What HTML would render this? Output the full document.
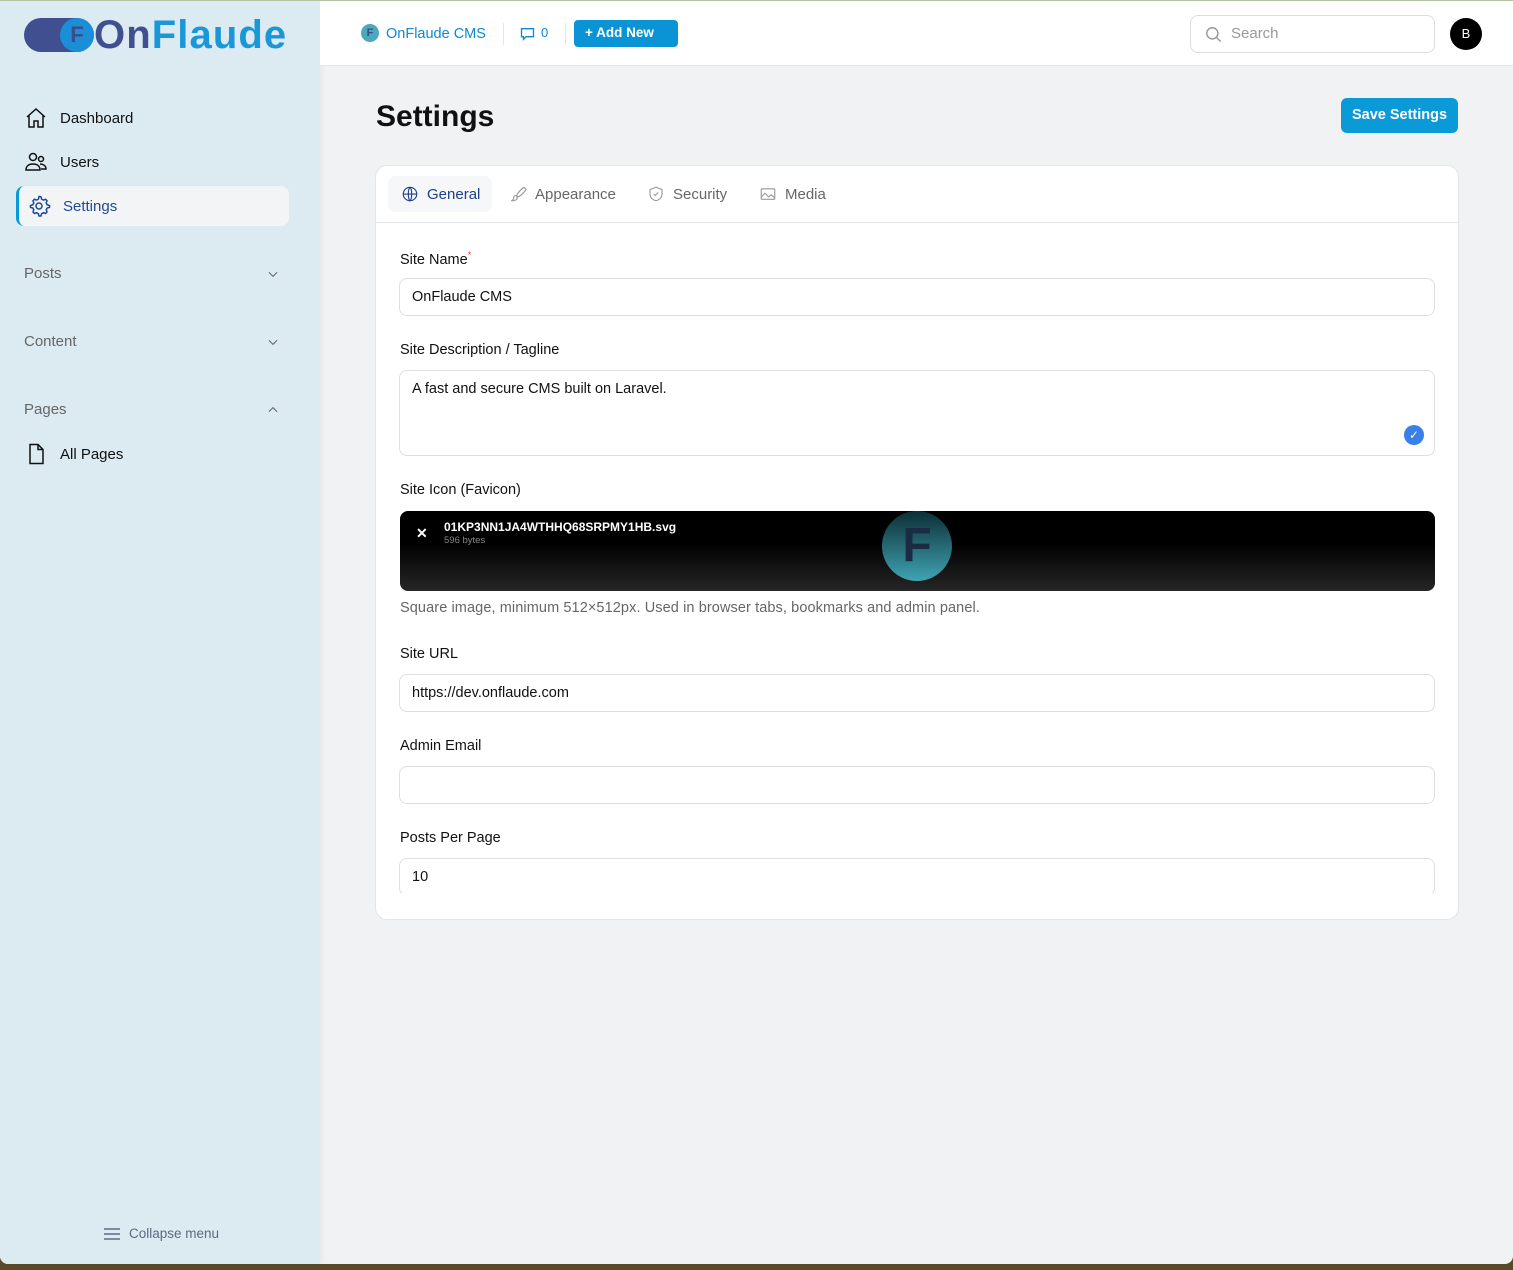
<!DOCTYPE html>
<html><head><meta charset="utf-8"><style>
*{box-sizing:border-box;margin:0;padding:0}
body{width:1513px;height:1270px;overflow:hidden;background:#5a4a2a;font-family:"Liberation Sans",sans-serif;position:relative}
.wrap{position:absolute;left:0;top:0;width:1513px;height:1264px;background:#f1f2f4;border-radius:0 0 8px 8px;overflow:hidden;border-top:1px solid #b5c4a0}
.side{position:absolute;left:0;top:0;width:320px;height:100%;background:#dceaf2;box-shadow:2px 0 6px rgba(0,0,0,.05)}
.top{position:absolute;left:320px;top:0;right:0;height:65px;background:#fff;border-bottom:1px solid #e2e4e8}
.logo{position:absolute;left:24px;top:16px;display:flex;align-items:center}
.pill{width:70px;height:34px;border-radius:17px;background:#3f4f8f;position:relative}
.pill .c{position:absolute;right:0;top:0;width:34px;height:34px;border-radius:50%;background:#1a8fd8;color:#3a4c8a;font-weight:bold;font-size:22px;text-align:center;line-height:34px}
.logotxt{font-size:40px;font-weight:bold;color:#1a97d8;letter-spacing:1.1px;line-height:36px}
.logotxt b{color:#3f4f8f}
.nav{position:absolute;left:24px;font-size:15px;color:#111;display:flex;align-items:center;gap:12px}
.nav svg{width:24px;height:24px;fill:none;stroke:#111;stroke-width:1.5}
.sec{position:absolute;left:24px;width:256px;font-size:15px;color:#666;display:flex;justify-content:space-between;align-items:center}
.sec svg{width:14px;height:14px;fill:none;stroke:#666;stroke-width:1.8}
.card{position:absolute;left:375px;top:164px;width:1084px;height:755px;background:#fff;border:1px solid #e3e5e8;border-radius:12px}
.lbl{position:absolute;left:24px;font-size:14.5px;color:#111}
.inp{position:absolute;left:23px;width:1036px;height:38px;border:1px solid #dcdfe3;border-radius:8px;font-size:14.5px;color:#111;padding:10px 12px}
.tab{position:absolute;top:10px;height:36px;display:flex;align-items:center;gap:8px;font-size:15px;color:#666}
.tab svg{width:18px;height:18px;fill:none;stroke:#999;stroke-width:1.5}
</style></head><body>
<div class="wrap">
<div class="side">
 <div class="logo"><div class="pill"><div class="c">F</div></div><div class="logotxt"><b>On</b>Flaude</div></div>
 <div class="nav" style="top:105px"><svg viewBox="0 0 24 24"><path d="M3 11 12 3l9 8M5 9.5V21h5v-6h4v6h5V9.5"/></svg>Dashboard</div>
 <div class="nav" style="top:149px"><svg viewBox="0 0 24 24"><circle cx="9" cy="7" r="3.5"/><circle cx="17" cy="9" r="2.5"/><path d="M2 20c0-4 3-6 7-6s7 2 7 6zM16 14c3 0 6 1.5 6 5h-5"/></svg>Users</div>
 <div style="position:absolute;left:16px;top:185px;width:273px;height:40px;background:#f3f4f6;border-radius:8px;border-left:3px solid #0a9ad8"></div>
 <div class="nav" style="top:193px;left:27px;color:#1d4a94"><svg viewBox="0 0 24 24" style="stroke:#1d4a94"><circle cx="12" cy="12" r="3"/><path d="M12 2.5l2 .3.6 2.3 1.8 1 2.2-.8 1.4 1.5-.8 2.2 1 1.8 2.3.6v2l-2.3.6-1 1.8.8 2.2-1.4 1.5-2.2-.8-1.8 1-.6 2.3h-2l-.6-2.3-1.8-1-2.2.8-1.4-1.5.8-2.2-1-1.8-2.3-.6v-2l2.3-.6 1-1.8-.8-2.2 1.4-1.5 2.2.8 1.8-1 .6-2.3z"/></svg>Settings</div>
 <div class="sec" style="top:264px">Posts<svg viewBox="0 0 24 24"><path d="M5 9l7 7 7-7"/></svg></div>
 <div class="sec" style="top:332px">Content<svg viewBox="0 0 24 24"><path d="M5 9l7 7 7-7"/></svg></div>
 <div class="sec" style="top:400px">Pages<svg viewBox="0 0 24 24"><path d="M5 15l7-7 7 7"/></svg></div>
 <div class="nav" style="top:441px"><svg viewBox="0 0 24 24"><path d="M6 2.5h8l5 5V21.5H6zM14 2.5v5h5"/></svg>All Pages</div>
 <div style="position:absolute;left:104px;top:1225px;font-size:13.5px;color:#5b6b80;display:flex;align-items:center;gap:9px"><svg width="16" height="14" viewBox="0 0 16 14" stroke="#5b6b80" stroke-width="1.6"><path d="M0 2h16M0 7h16M0 12h16"/></svg>Collapse menu</div>
</div>
<div class="top">
 <div style="position:absolute;left:41px;top:23px;width:18px;height:18px;border-radius:50%;background:#4aaabb;color:#3a4c8a;font-size:11px;font-weight:bold;text-align:center;line-height:18px">F</div>
 <div style="position:absolute;left:66px;top:25px;font-size:14.5px;color:#0a8ad0">OnFlaude CMS</div>
 <div style="position:absolute;left:183px;top:22px;width:1px;height:22px;background:#e4e4e4"></div>
 <svg style="position:absolute;left:199px;top:25px" width="17" height="16" viewBox="0 0 24 24" fill="none" stroke="#0a8ad0" stroke-width="2"><path d="M3 4h18v12H10l-4 4v-4H3z"/></svg>
 <div style="position:absolute;left:221px;top:24px;font-size:13px;color:#0a8ad0">0</div>
 <div style="position:absolute;left:245px;top:22px;width:1px;height:22px;background:#e4e4e4"></div>
 <div style="position:absolute;left:254px;top:19px;width:104px;height:27px;background:#0a94d6;border-radius:4px;color:#fff;font-size:13.5px;font-weight:bold;padding:5px 11px">+ Add New</div>
 <div style="position:absolute;left:870px;top:14px;width:245px;height:38px;border:1px solid #dadde2;border-radius:8px;font-size:15px;color:#999;padding:9px 0 0 40px">Search
  <svg style="position:absolute;left:13px;top:9px" width="19" height="19" viewBox="0 0 24 24" fill="none" stroke="#999" stroke-width="1.8"><circle cx="10.5" cy="10.5" r="7"/><path d="M16 16l5 5"/></svg></div>
 <div style="position:absolute;left:1130px;top:17px;width:32px;height:32px;border-radius:50%;background:#000;color:#fff;font-size:13px;text-align:center;line-height:32px">B</div>
</div>
<div style="position:absolute;left:376px;top:99px;font-size:30px;font-weight:bold;color:#111">Settings</div>
<div style="position:absolute;left:1341px;top:97px;width:117px;height:35px;background:#0a9ad8;border-radius:6px;color:#fff;font-size:14.5px;font-weight:bold;text-align:center;line-height:35px">Save Settings</div>
<div class="card">
 <div style="position:absolute;left:12px;top:10px;width:104px;height:36px;background:#f6f7f9;border-radius:8px"></div>
 <div class="tab" style="left:25px;color:#1d3f8a"><svg viewBox="0 0 24 24" style="stroke:#1d3f8a"><circle cx="12" cy="12" r="9"/><path d="M3 12h18M12 3c3 3 3 15 0 18M12 3c-3 3-3 15 0 18"/></svg>General</div>
 <div class="tab" style="left:133px"><svg viewBox="0 0 24 24"><path d="M20 3c-4 3-8 7-10 11l2 2c4-2 8-6 11-10zM10 14c-3 0-4 2-4 4 0 1-1 2-3 3 4 0 8-1 8-4z"/></svg>Appearance</div>
 <div class="tab" style="left:271px"><svg viewBox="0 0 24 24"><path d="M12 3 4 6v6c0 5 4 8 8 9 4-1 8-4 8-9V6z"/><path d="M9 12l2 2 4-4"/></svg>Security</div>
 <div class="tab" style="left:383px"><svg viewBox="0 0 24 24"><rect x="3" y="5" width="18" height="14" rx="1"/><path d="M3 16l5-5 5 5 3-3 5 4"/></svg>Media</div>
 <div style="position:absolute;left:0;right:0;top:56px;height:1px;background:#e5e7eb"></div>
 <div class="lbl" style="top:84px">Site Name<sup style="color:#e33;font-size:9px">*</sup></div>
 <div class="inp" style="top:112px">OnFlaude CMS</div>
 <div class="lbl" style="top:176px">Site Description / Tagline</div>
 <div class="inp" style="top:204px;height:86px">A fast and secure CMS built on Laravel.
  <div style="position:absolute;right:10px;top:54px;width:20px;height:20px;border-radius:50%;background:#3b7fe8;color:#fff;font-size:12px;text-align:center;line-height:20px">✓</div></div>
 <div class="lbl" style="top:316px">Site Icon (Favicon)</div>
 <div style="position:absolute;left:24px;top:345px;width:1035px;height:80px;border-radius:8px;background:linear-gradient(#000,#000 40%,#262626)">
  <div style="position:absolute;left:16px;top:14px;color:#fff;font-size:14px;font-weight:bold">✕</div>
  <div style="position:absolute;left:44px;top:9px;color:#fff;font-size:12px;font-weight:bold">01KP3NN1JA4WTHHQ68SRPMY1HB.svg</div>
  <div style="position:absolute;left:44px;top:24px;color:#888;font-size:9.5px">596 bytes</div>
  <div style="position:absolute;left:482px;top:0;width:70px;height:70px;border-radius:50%;background:linear-gradient(#0c2e36,#3fa4b2);color:#1c2b44;font-size:48px;font-weight:bold;text-align:center;line-height:70px">F</div>
 </div>
 <div style="position:absolute;left:24px;top:434px;font-size:14.5px;color:#666;letter-spacing:0.1px">Square image, minimum 512×512px. Used in browser tabs, bookmarks and admin panel.</div>
 <div class="lbl" style="top:480px">Site URL</div>
 <div class="inp" style="top:508px">https://dev.onflaude.com</div>
 <div class="lbl" style="top:572px">Admin Email</div>
 <div class="inp" style="top:600px"></div>
 <div class="lbl" style="top:664px">Posts Per Page</div>
 <div class="inp" style="top:692px;height:38px;border-bottom-color:#fff">10</div>
</div>
</div>
</body></html>
